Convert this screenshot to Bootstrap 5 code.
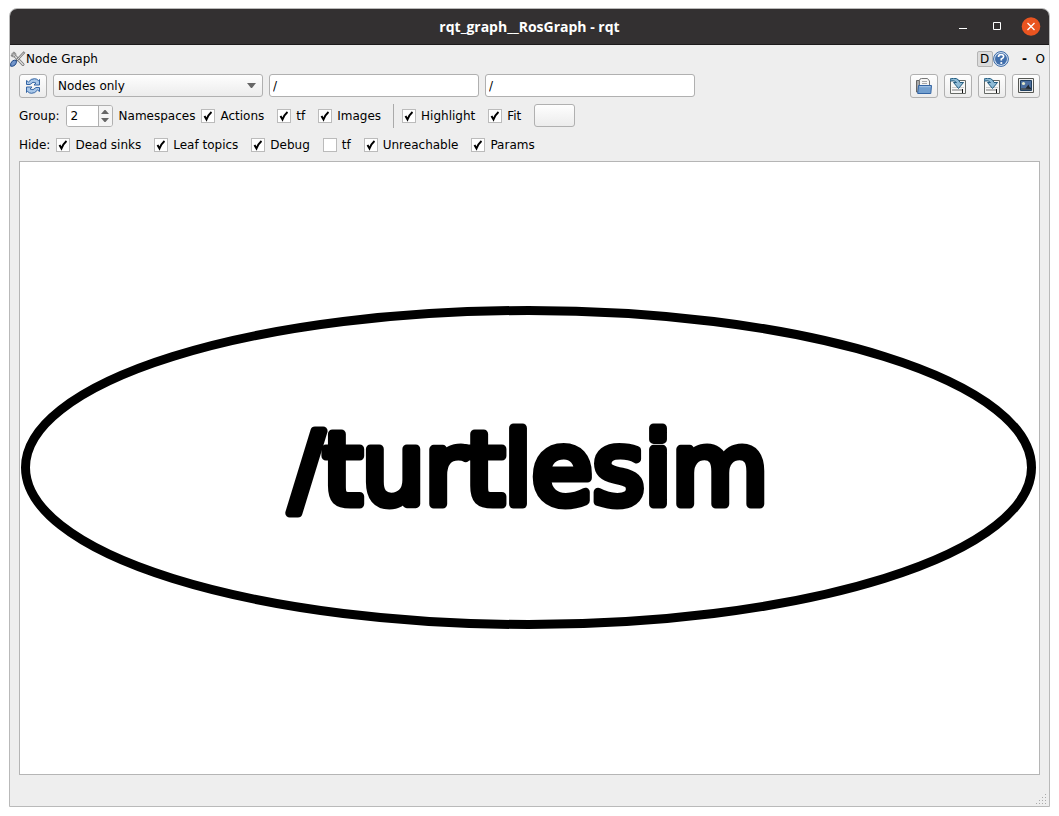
<!DOCTYPE html>
<html lang="en">
<head>
<meta charset="utf-8">
<meta name="viewport" content="width=device-width, initial-scale=1">
<title>rqt_graph__RosGraph - rqt</title>
<link rel="stylesheet" href="https://cdn.jsdelivr.net/npm/bootstrap@5.3.0/dist/css/bootstrap.min.css">
<style>
body { background: #fff; color: #000; font: 12px/16px "DejaVu Sans", sans-serif; padding: 8px 9px 9px; }
.app-window { background: #eee; border: 1px solid #b9b9b9; border-radius: 8px 8px 0 0; overflow: hidden; }
.titlebar { background: #333031; color: #fff; height: 36px; border-bottom: 1px solid #1c1a1b; font: bold 14px/18px "Open Sans", sans-serif; grid-template-columns: 1fr auto 1fr; }
.win-controls { gap: 14px; padding-right: 8px; }
.titlebar .win-btn { width: 20px; height: 20px; }
.bare { border: 0; background: none; padding: 0; color: inherit; line-height: 16px; }
.bare svg, .tool svg { display: block; }
.dock-head { height: 27px; }
.dock-btn { width: 16px; height: 16px; }
.dock-btn.pressed { background: #dcdcdc; border: 1px solid #b4b4b4; border-radius: 2px; line-height: 14px; }
.dock-float { margin-left: 8px; margin-right: 3px; }
.panel { padding: 2px 9px 0; }
.tool-row { gap: 6px; }
.tool, .field { border: 1px solid #b0b0b0; border-radius: 3px; }
.tool { background: linear-gradient(#fefefe, #ececec); width: 28px; height: 24px; padding: 0; place-items: center; }
.tool.wide { width: 41px; height: 23px; }
.field { background-color: #fff; color: #000; height: 23px; width: 210px; padding: 0 3px; font-size: 12px; line-height: 20px; }
select.field { padding: 0 4px; background: url("data:image/svg+xml,%3Csvg xmlns='http://www.w3.org/2000/svg' width='9' height='5'%3E%3Cpath d='M0 0h9L5 5H4z' fill='%23666'/%3E%3C/svg%3E") no-repeat right 6px center, linear-gradient(#fefefe, #ececec); }
.field:focus { box-shadow: none; }
.spin { width: 47px; height: 22px; border: 1px solid #b0b0b0; border-radius: 3px; background: #fff; overflow: hidden; }
.spin input { width: 31px; border: 0; padding: 0 4px; appearance: textfield; outline: 0; color: #000; }
.spin input::-webkit-inner-spin-button { appearance: none; }
.spin-arrows { background: #f4f4f4; border-left: 1px solid #b0b0b0; }
.options { height: 23px; gap: 13px; margin-top: 6px; }
.lead-in { gap: 6px; }
.opt { display: flex; align-items: center; gap: 5px; white-space: nowrap; }
.opt input { appearance: none; width: 14px; height: 14px; margin: 0; background: #fff center no-repeat; border: 1px solid #bbb; }
.opt input:checked { background-image: url("data:image/svg+xml,%3Csvg xmlns='http://www.w3.org/2000/svg' width='12' height='12'%3E%3Cpath d='M2.5 6l2 3.5Q6.500 4.500 9.500 2' fill='none' stroke='%23000' stroke-width='2'/%3E%3C/svg%3E"); }
.rule { width: 1px; height: 24px; background: #aaa; margin: 0 -5px 0 -1px; }
.graph { background: #fff; border: 1px solid #b5b5b5; margin: 5px 9px 0; min-height: 0; }
.graph text { font: 99px "DejaVu Sans", sans-serif; stroke: #000; stroke-width: 9px; stroke-linejoin: round; }
.status { height: 31px; padding: 0 1px 1px; }
</style>
<script src="https://cdn.jsdelivr.net/npm/bootstrap@5.3.0/dist/js/bootstrap.bundle.min.js"></script>
</head>
<body class="vh-100 d-flex flex-column">
<svg class="d-none" aria-hidden="true">
  <symbol id="save" viewBox="0 0 16 16">
    <path d="M.5 2.500h15v13H.5z" fill="#f8f8f7" stroke="#666a66"/>
    <path d="M8 4.500h6M2 9.500h12" stroke="#ccc"/>
    <path d="M2 11h10v2H2z" fill="#b8b8b8"/><path d="M12 11h1v4h-1z" fill="#111"/>
    <path d="M0 1Q8-1.500 10 4.500h3.500L8.500 10.500 3.500 4.500H6.500Q5 2 0 3z" fill="#8fbbd6" stroke="#245d80"/>
  </symbol>
</svg>
<main class="app-window flex-fill d-flex flex-column">
  <header class="titlebar d-grid align-items-center flex-shrink-0">
    <span></span><span>rqt_graph__RosGraph - rqt</span>
    <div class="win-controls d-flex justify-content-end">
      <button class="bare win-btn" aria-label="Minimize"><svg width="20" height="20"><path d="M6 11.500h8" stroke="#fff"/></svg></button>
      <button class="bare win-btn" aria-label="Maximize"><svg width="20" height="20"><path d="M6.500 5.500h7v7h-7z" fill="none" stroke="#fff"/></svg></button>
      <button class="bare win-btn" aria-label="Close"><svg width="20" height="20"><circle cx="10" cy="9.500" r="9.300" fill="#e95420"/><path d="M6.500 6l7 7m0-7l-7 7" stroke="#fff" stroke-width="1.300"/></svg></button>
    </div>
  </header>

  <div class="dock-head d-flex align-items-center flex-shrink-0">
    <svg width="16" height="16" viewBox="0 0 16 16"><path d="M3 3l10 10.500" stroke="#777" stroke-width="3" stroke-linecap="round"/><path d="M3 3l10 10.500" stroke="#ddd" stroke-width="1.400" stroke-linecap="round"/><path d="M1 4q0 2 3 2 2-1 2-3Q5 1 3.500 1l1 2L3 4.500z" fill="#ccc" stroke="#777" stroke-width=".8"/><path d="M14.500 1L6 10" stroke="#777" stroke-width="2.500"/><path d="M14 1.500L7 9" stroke="#ddd"/><path d="M.7 15.200q-.7-3 1.500-5Q4 8.500 6.300 9.500 7 12 5 14q-2 1.800-4.300 1.200z" fill="#7396cb" stroke="#204a87"/></svg>
    <span>Node Graph</span>
    <div class="ms-auto d-flex align-items-center pe-1">
      <button class="bare dock-btn pressed">D</button>
      <button class="bare dock-btn" aria-label="Help"><svg width="16" height="16" viewBox="0 0 16 16"><circle cx="8" cy="8" r="7.400" fill="#dce6f3" stroke="#3465a4"/><circle cx="8" cy="8" r="6" fill="#416fac"/><path d="M5.500 6q0-2.500 2.600-2.500t2.500 2.300Q10.600 7 8.300 8v1.600" fill="none" stroke="#fff" stroke-width="1.700"/><circle cx="8.300" cy="12" r="1.100" fill="#fff"/></svg></button>
      <button class="bare dock-btn dock-float fw-bold">-</button>
      <button class="bare">O</button>
    </div>
  </div>

  <div class="panel flex-shrink-0">
    <div class="tool-row d-flex">
      <button class="tool d-grid" aria-label="Refresh"><svg width="16" height="16" viewBox="0 0 16 16"><g id="half"><path d="M1.500 6.500V2.500L3.500 4Q6 .5 9.500.7q2.500 0 4 2L14.500 1.500V7H9L11 5Q8 2.800 5 6.500z" fill="#a9c7e8" stroke="#3465a4"/></g><use href="#half" transform="rotate(180 8 8)"/></svg></button>
      <select class="field form-select" aria-label="Graph type"><option>Nodes only</option></select>
      <input class="field form-control" value="/" aria-label="Node filter">
      <input class="field form-control" value="/" aria-label="Topic filter">
      <div class="tool-row ms-auto d-flex">
        <button class="tool d-grid" aria-label="Load"><svg width="16" height="16" viewBox="0 0 16 16"><path d="M.5 14V2.500h4V14z" fill="#aaa" stroke="#666"/><path d="M3.500 9V2.500q0-2 2-2h6L13.500 3v6z" fill="#f5f5f4" stroke="#777"/><path d="M6 3.500h5M6 5.500h5" stroke="#aaa"/><path d="M2.500 7.500h13l-.7 8H1.700z" fill="#729fcf" stroke="#3465a4"/><path d="M3.500 8.700h11" stroke="#a5c4e5"/></svg></button>
        <button class="tool d-grid" aria-label="Save DOT"><svg width="16" height="16"><use href="#save"/></svg></button>
        <button class="tool d-grid" aria-label="Save SVG"><svg width="16" height="16"><use href="#save"/></svg></button>
        <button class="tool d-grid" aria-label="Save image"><svg width="16" height="16" viewBox="0 0 16 16"><path d="M.5 .5h15v14H.5z" fill="#eee" stroke="#555753"/><path d="M2.500 2.500h11v10h-11z" fill="#4c6e9e" stroke="#204060"/><path d="M3 10h10v2H3z" fill="#4a5660"/><path d="M7.500 10.500l3-4 1 2.500 1.500 1v1z" fill="#202830"/><circle cx="5.500" cy="5.500" r="1.600" fill="#e5eacb"/></svg></button>
      </div>
    </div>

    <div class="options d-flex align-items-center">
      <div class="lead-in d-flex align-items-center">
        <label for="group">Group:</label>
        <div class="spin d-flex"><input id="group" type="number" value="2">
          <svg class="spin-arrows" width="14" height="20"><path d="M2 8h8L6.500 4h-1zM2 12h8l-3.500 4h-1z" fill="#666"/></svg></div>
        <span>Namespaces</span>
        <label class="opt"><input type="checkbox" checked>Actions</label>
      </div>
      <label class="opt"><input type="checkbox" checked>tf</label>
      <label class="opt"><input type="checkbox" checked>Images</label>
      <span class="rule"></span>
      <label class="opt"><input type="checkbox" checked>Highlight</label>
      <label class="opt"><input type="checkbox" checked>Fit</label>
      <button class="tool wide" aria-label="Fit in view"></button>
    </div>

    <div class="options d-flex align-items-center">
      <div class="lead-in d-flex align-items-center"><span>Hide:</span>
        <label class="opt"><input type="checkbox" checked>Dead sinks</label></div>
      <label class="opt"><input type="checkbox" checked>Leaf topics</label>
      <label class="opt"><input type="checkbox" checked>Debug</label>
      <label class="opt"><input type="checkbox">tf</label>
      <label class="opt"><input type="checkbox" checked>Unreachable</label>
      <label class="opt"><input type="checkbox" checked>Params</label>
    </div>
  </div>

  <div class="graph flex-fill d-flex">
    <svg class="w-100 h-100" viewBox="0 0 1019 324">
      <ellipse cx="508.500" cy="161.500" rx="503" ry="157" fill="none" stroke="#000" stroke-width="9"/>
      <text x="509" y="198" text-anchor="middle">/turtlesim</text>
    </svg>
  </div>
  <footer class="status d-flex justify-content-end align-items-end flex-shrink-0">
    <svg width="12" height="12"><path d="M0 10.500h12M3 7.500h9M6 4.500h6M9 1.500h3" stroke="#aaa" stroke-dasharray="1 2"/></svg>
  </footer>
</main>
</body>
</html>
